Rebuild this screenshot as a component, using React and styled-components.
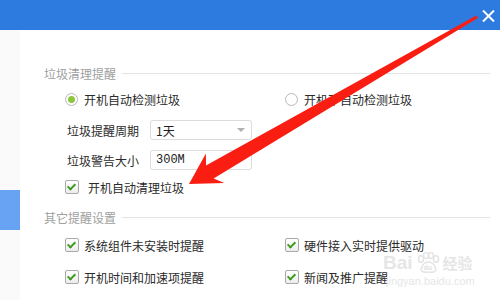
import React, { useState } from 'react';
import styled, { createGlobalStyle } from 'styled-components';

const GlobalStyle = createGlobalStyle`
    html, body {
        margin: 0;
        padding: 0;
        width: 500px;
        height: 300px;
        overflow: hidden;
        background: #fff;
    }
    body {
        font-family: "Noto Sans CJK SC", "Noto Sans", "Liberation Sans", sans-serif;
        color: #333;
    }
`;

export default function App() {
    const [scan, setScan] = useState('auto');
    const [checks, setChecks] = useState({
        autoClean: true,
        component: true,
        hardware: true,
        boot: true,
        news: true,
    });
    const toggle = (key) => setChecks({ ...checks, [key]: !checks[key] });

    return (
        <>
            <GlobalStyle />
            <Window>
                <TopBar>
                    <Close>
                        <svg width="13" height="12" viewBox="0 0 13 12">
                            <path d="M1 0.5 L12 11.5 M12 0.5 L1 11.5" stroke="#fff" strokeWidth="2" />
                        </svg>
                    </Close>
                </TopBar>
                <Body>
                    <Sidebar>
                        <Tab />
                    </Sidebar>
                    <Content>
                        <SectionTitle>
                            <span>垃圾清理提醒</span>
                            <Rule />
                        </SectionTitle>
                        <TwoCols top={7}>
                            <Option onClick={() => setScan('auto')}>
                                <Radio checked={scan === 'auto'} />
                                <span>开机自动检测垃圾</span>
                            </Option>
                            <Option onClick={() => setScan('none')}>
                                <Radio checked={scan === 'none'} />
                                <span>开机不自动检测垃圾</span>
                            </Option>
                        </TwoCols>
                        <FieldRow top={6}>
                            <FieldLabel>垃圾提醒周期</FieldLabel>
                            <Field>
                                <span>1天</span>
                                <Caret />
                            </Field>
                        </FieldRow>
                        <FieldRow>
                            <FieldLabel>垃圾警告大小</FieldLabel>
                            <Field mono>
                                <span>300M</span>
                            </Field>
                        </FieldRow>
                        <CheckRow>
                            <Option gap={9} onClick={() => toggle('autoClean')}>
                                <Check checked={checks.autoClean} />
                                <span>开机自动清理垃圾</span>
                            </Option>
                        </CheckRow>
                        <SectionTitle top={9}>
                            <span>其它提醒设置</span>
                            <Rule />
                        </SectionTitle>
                        <TwoCols top={9}>
                            <Option gap={5} onClick={() => toggle('component')}>
                                <Check checked={checks.component} />
                                <span>系统组件未安装时提醒</span>
                            </Option>
                            <Option gap={5} onClick={() => toggle('hardware')}>
                                <Check checked={checks.hardware} />
                                <span>硬件接入实时提供驱动</span>
                            </Option>
                        </TwoCols>
                        <TwoCols top={12}>
                            <Option gap={5} onClick={() => toggle('boot')}>
                                <Check checked={checks.boot} />
                                <span>开机时间和加速项提醒</span>
                            </Option>
                            <Option gap={5} onClick={() => toggle('news')}>
                                <Check checked={checks.news} />
                                <span>新闻及推广提醒</span>
                            </Option>
                        </TwoCols>
                    </Content>
                </Body>

                <Watermark>
                    <Brand>
                        <span>Bai</span>
                        <svg width="24" height="22" viewBox="0 0 24 22">
                            <g fill="none" stroke="#e4e4e4" strokeWidth="1.5">
                                <ellipse cx="5" cy="7" rx="2.5" ry="3.2" />
                                <ellipse cx="10" cy="3.5" rx="2.5" ry="3" />
                                <ellipse cx="15" cy="3.5" rx="2.5" ry="3" />
                                <ellipse cx="20" cy="7" rx="2.5" ry="3.2" />
                                <path d="M5 17 Q7 10 12.5 10 Q18 10 20 17 Q20 21 12.5 20 Q5 21 5 17 Z" />
                            </g>
                            <text x="7.5" y="18" fontSize="7" fill="#e0e0e0" fontFamily="Liberation Sans, sans-serif">du</text>
                        </svg>
                        <small>经验</small>
                    </Brand>
                    <Site>jingyan.baidu.com</Site>
                </Watermark>

                <Annotation width="500" height="300" viewBox="0 0 500 300">
                    <polygon
                        fill="#fa1d12"
                        points="476.3,15.5 477.8,18.1 213.6,178.5 224.3,183.1 189,184 205.9,153.4 206,165.5"
                    />
                </Annotation>
            </Window>
        </>
    );
}

const Window = styled.div`
    position: relative;
    width: 500px;
    height: 300px;
    display: flex;
    flex-direction: column;
    background: #fff;
`;
const TopBar = styled.div`
    height: 30px;
    flex: none;
    background: #2e7be0;
    display: flex;
    justify-content: flex-end;
    align-items: flex-start;
`;
const Close = styled.div`
    width: 13px;
    height: 12px;
    margin: 10px 5px 0 0;
    display: flex;
    svg { display: block; }
`;
const Body = styled.div`
    flex: 1;
    display: flex;
`;
const Sidebar = styled.div`
    width: 20px;
    flex: none;
    background: #fafafa;
`;
const Tab = styled.div`
    margin-top: 160px;
    height: 40px;
    background: #68a2f2;
`;
const Content = styled.div`
    flex: 1;
    padding: 34px 10px 0 24px;
    display: flex;
    flex-direction: column;
    font-size: 12px;
`;
const SectionTitle = styled.div`
    height: 18px;
    margin-top: ${p => p.top || 0}px;
    display: flex;
    align-items: center;
    color: #a0a0a0;
    font-size: 12px;
`;
const Rule = styled.div`
    flex: 1;
    height: 1px;
    margin-left: 6px;
    background: #e4e4e4;
`;
const TwoCols = styled.div`
    height: 20px;
    margin-top: ${p => p.top || 0}px;
    padding-left: 21px;
    display: grid;
    grid-template-columns: 220px 1fr;
    align-items: center;
`;
const CheckRow = styled.div`
    height: 24px;
    padding-left: 21px;
    display: flex;
    align-items: center;
`;
const Option = styled.div`
    display: flex;
    align-items: center;
    gap: ${p => p.gap || 6}px;
    color: #2a2a2a;
    cursor: pointer;
    white-space: nowrap;
`;
const Radio = styled.span`
    width: 11px;
    height: 11px;
    border: 1px solid #b9b9b9;
    border-radius: 50%;
    background: #fff;
    display: flex;
    align-items: center;
    justify-content: center;
    &::after {
        content: '';
        width: 7px;
        height: 7px;
        border-radius: 50%;
        background: #8cc63f;
        display: ${p => (p.checked ? 'block' : 'none')};
    }
`;
const Check = styled.span`
    width: 12px;
    height: 12px;
    border: 1px solid #a9a9a9;
    border-radius: 2px;
    background: linear-gradient(#fff, #ececec);
    position: relative;
    &::after {
        content: '';
        position: absolute;
        left: 3px;
        top: 1px;
        width: 3px;
        height: 6px;
        border: solid #3b9c1b;
        border-width: 0 2px 2px 0;
        transform: rotate(45deg);
        display: ${p => (p.checked ? 'block' : 'none')};
    }
`;
const FieldRow = styled.div`
    height: 30px;
    margin-top: ${p => p.top || 0}px;
    padding-left: 23px;
    display: flex;
    align-items: center;
`;
const FieldLabel = styled.span`
    width: 83px;
    color: #2a2a2a;
`;
const Field = styled.div`
    width: 95px;
    height: 18px;
    padding-left: 5px;
    border: 1px solid #dcdcdc;
    border-radius: 3px;
    display: flex;
    align-items: center;
    justify-content: space-between;
    font-family: ${p => (p.mono ? '"Liberation Mono", monospace' : 'inherit')};
    font-size: 12px;
    color: #222;
`;
const Caret = styled.span`
    width: 0;
    height: 0;
    margin-right: 6px;
    border-left: 4px solid transparent;
    border-right: 4px solid transparent;
    border-top: 4px solid #b0b0b0;
`;
const Watermark = styled.div`
    position: absolute;
    left: 383px;
    top: 252px;
    display: flex;
    flex-direction: column;
    align-items: flex-start;
    color: #e6e6e6;
    pointer-events: none;
`;
const Brand = styled.div`
    display: flex;
    align-items: center;
    gap: 3px;
    font-family: "Liberation Sans", sans-serif;
    font-size: 19px;
    font-weight: bold;
    line-height: 22px;
    small {
        font-family: "Noto Sans CJK SC", sans-serif;
        font-size: 15px;
        font-weight: bold;
    }
`;
const Site = styled.div`
    font-family: "Liberation Sans", sans-serif;
    font-size: 11px;
    line-height: 14px;
    margin-left: 3px;
`;
const Annotation = styled.svg`
    position: absolute;
    left: 0;
    top: 0;
    pointer-events: none;
`;
